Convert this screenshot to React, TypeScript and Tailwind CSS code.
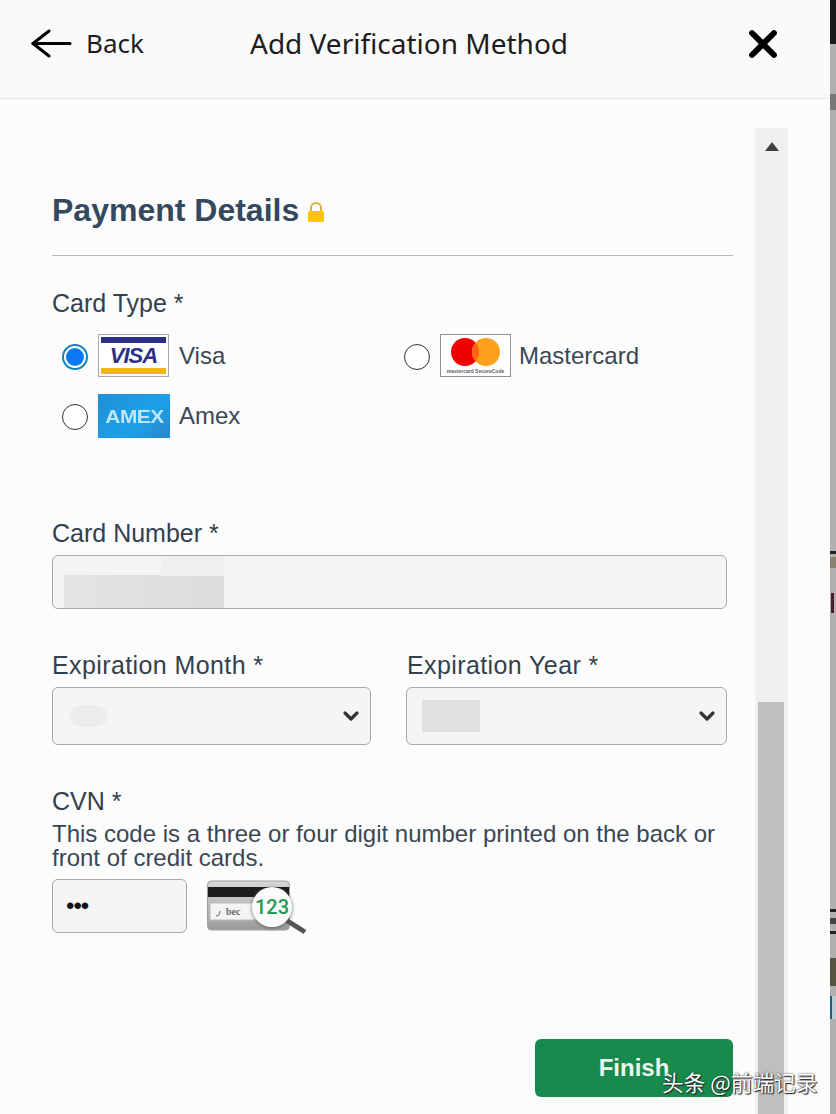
import { ChevronDown, X } from 'lucide-react';

function VisaLogo() {
  return (
    <div className="w-[71px] h-[43px] border border-[#a8a8a8] bg-white flex flex-col justify-between p-[2px] shrink-0">
      <div className="h-[6px] bg-[#2b2f86]" />
      <div className="text-center text-[#2b2f86] font-bold italic text-[22px] leading-none tracking-[-1px]">VISA</div>
      <div className="h-[6px] bg-[#f3b323]" />
    </div>
  );
}

function MastercardLogo() {
  return (
    <div className="w-[71px] h-[43px] border border-[#8f8f8f] bg-white flex flex-col items-center shrink-0">
      <svg width="50" height="32" viewBox="0 0 50 32" className="mt-[1px]">
        <circle cx="14" cy="16" r="14" fill="#f00000" />
        <circle cx="35" cy="16" r="14" fill="#ffa11a" />
        <path d="M24.5 6.7a14 14 0 0 1 0 18.6a14 14 0 0 1 0-18.6z" fill="#fb6414" />
      </svg>
      <div className="text-[5px] leading-[6px] text-[#5c5c6a] font-bold whitespace-nowrap">mastercard SecureCode</div>
    </div>
  );
}

function AmexLogo() {
  return (
    <div className="w-[72px] h-[44px] bg-[linear-gradient(135deg,#1f8fd6,#1da1e8_60%,#2a86c8)] flex items-center justify-center shrink-0">
      <span className="text-[19px] leading-none font-black text-[#bfe6f7] tracking-[-0.5px] scale-x-110">AMEX</span>
    </div>
  );
}

function CvnPicture() {
  return (
    <svg width="102" height="56" viewBox="0 0 102 56" className="shrink-0 mt-[1px]">
      <defs>
        <linearGradient id="cardBody" x1="0" y1="0" x2="0" y2="1">
          <stop offset="0" stopColor="#d8d8d8" />
          <stop offset="1" stopColor="#9a9a9a" />
        </linearGradient>
        <filter id="lensShadow" x="-30%" y="-30%" width="160%" height="160%">
          <feGaussianBlur stdDeviation="1.5" />
        </filter>
      </defs>
      <rect x="0.5" y="1" width="82" height="49" rx="4" fill="url(#cardBody)" stroke="#a0a0a0" />
      <rect x="1" y="7" width="81" height="10" fill="#1c1c1c" />
      <rect x="3" y="23" width="50" height="17" fill="#f4f4f4" stroke="#bbbbbb" />
      <path d="M9 36c3 0 4-2 4-5" fill="none" stroke="#666" strokeWidth="1" />
      <text x="19" y="35" fontSize="10" fontWeight="700" fontFamily="Liberation Serif, serif" fill="#666">bec</text>
      <path d="M79 40l19 12" stroke="#555" strokeWidth="5" />
      <circle cx="65" cy="28" r="21" fill="#555" opacity="0.5" filter="url(#lensShadow)" />
      <circle cx="65" cy="27" r="20" fill="#fbfbfb" />
      <text x="65" y="34" textAnchor="middle" fontSize="20" fontWeight="500" fontFamily="Roboto, sans-serif" fill="#1f9a58">123</text>
    </svg>
  );
}

function Radio({ checked }: { checked?: boolean }) {
  return checked ? (
    <span className="w-[26px] h-[26px] mt-[2px] rounded-full border-2 border-[#1083b8] bg-white flex items-center justify-center shrink-0">
      <span className="w-[18px] h-[18px] rounded-full bg-[#0a78f5]" />
    </span>
  ) : (
    <span className="w-[26px] h-[26px] mt-[2px] rounded-full border-[1.5px] border-[#333] bg-white shrink-0" />
  );
}

export default function App() {
  return (
    <div className="relative w-[836px] h-[1114px] overflow-hidden flex bg-[#fdfcfd] text-[#33404d] font-['Liberation_Sans',Arial,sans-serif]">
      <div className="w-[830px] flex flex-col">
        {/* top bar */}
        <header className="h-[99px] shrink-0 border-b border-[#e6e4e5] bg-[#fbfafa] flex items-center pl-[31px] pr-[45px] pb-[11px] font-['Noto_Sans',sans-serif] text-[#1d1d1f]">
          <div className="w-[219px] flex items-center gap-[14px]">
            <svg width="41" height="30" viewBox="0 0 41 30" fill="none" stroke="black" strokeWidth="3" strokeLinecap="round" strokeLinejoin="round">
              <path d="M18 2L2 14.5L18 27" />
              <path d="M2 14.5H39" />
            </svg>
            <span className="text-[26px] leading-none mb-[2px]">Back</span>
          </div>
          <h1 className="flex-1 text-[28px] leading-none font-normal mb-[2px]">Add Verification Method</h1>
          <X size={44} strokeWidth={3.2} className="text-black" />
        </header>

        <div className="flex-1 flex pl-[52px]">
          <div className="w-[681px] shrink-0">
            <div className="flex items-center gap-[8px] pt-[66px] h-[157px] border-b border-[#b8b8ba]">
              <h2 className="text-[32px] leading-[44px] font-bold text-[#34495e]">Payment Details</h2>
              <svg width="18" height="22" viewBox="0 0 18 22" className="mt-[3px]">
                <path d="M4 10V7a5 5 0 0 1 10 0v3" fill="none" stroke="#d9b43a" strokeWidth="2" />
                <rect x="1" y="10" width="16" height="11" rx="1.5" fill="#fcc30b" />
              </svg>
            </div>

            <div className="mt-[33px] text-[25px] leading-[28px]">Card Type *</div>

            <div className="mt-[17px] pl-[10px] grid grid-cols-[342px_1fr] gap-y-[17px] text-[24px] text-[#3a4754]">
              <label className="flex items-center h-[43px]">
                <Radio checked />
                <span className="ml-[10px]"><VisaLogo /></span>
                <span className="ml-[10px]">Visa</span>
              </label>
              <label className="flex items-center h-[43px]">
                <Radio />
                <span className="ml-[10px]"><MastercardLogo /></span>
                <span className="ml-[8px]">Mastercard</span>
              </label>
              <label className="flex items-center h-[44px]">
                <Radio />
                <span className="ml-[10px]"><AmexLogo /></span>
                <span className="ml-[9px]">Amex</span>
              </label>
            </div>

            <div className="mt-[81px] text-[25px] leading-[28px]">Card Number *</div>
            <div className="mt-[8px] w-[675px] h-[54px] rounded-[6px] border border-[#a8a8a8] bg-[#f6f5f6] relative overflow-hidden">
              <div className="absolute left-[11px] top-[19px] w-[160px] h-[33px] bg-[linear-gradient(90deg,#e4e4e4,#dcdcdc)]" />
              <div className="absolute left-[108px] top-[1px] w-[63px] h-[19px] bg-[#efefef]" />
            </div>

            <div className="mt-[42px] flex gap-[35px] text-[25px] leading-[28px] tracking-[0.4px]">
              <div className="w-[319px]">
                <div>Expiration Month *</div>
                <div className="mt-[8px] h-[58px] rounded-[6px] border border-[#a8a8a8] bg-[#f6f5f6] flex items-center justify-between pl-[17px] pr-[7px]">
                  <div className="w-[37px] h-[22px] rounded-full bg-[#ececee]" />
                  <ChevronDown size={24} strokeWidth={3.2} className="text-[#333]" />
                </div>
              </div>
              <div className="w-[321px]">
                <div className="pl-[1px]">Expiration Year *</div>
                <div className="mt-[8px] h-[58px] rounded-[6px] border border-[#a8a8a8] bg-[#f6f5f6] flex items-center justify-between pl-[15px] pr-[7px]">
                  <div className="w-[58px] h-[32px] bg-[#e0e0e0]" />
                  <ChevronDown size={24} strokeWidth={3.2} className="text-[#333]" />
                </div>
              </div>
            </div>

            <div className="mt-[42px] text-[25px] leading-[28px]">CVN *</div>
            <p className="mt-[7px] w-[680px] text-[24px] leading-[24px] text-[#3a4754]">
              This code is a three or four digit number printed on the back or front of credit cards.
            </p>
            <div className="mt-[9px] flex items-start gap-[20px]">
              <div className="w-[135px] h-[54px] rounded-[6px] border border-[#a8a8a8] bg-[#f6f5f6] flex items-center pl-[13px] text-[#111] text-[24px] tracking-[-1px]">
                •••
              </div>
              <CvnPicture />
            </div>

            <div className="mt-[103px] flex justify-end">
              <button className="w-[198px] h-[58px] rounded-[6px] bg-[#178b4d] text-[#eaf7ef] text-[24px] font-bold">Finish</button>
            </div>
          </div>

          {/* scrollbar */}
          <div className="ml-[22px] mt-[29px] w-[33px] bg-[#f1f0f1] flex flex-col items-center">
            <svg width="14" height="9" viewBox="0 0 14 9" className="mt-[14px]">
              <path d="M7 0l7 9H0z" fill="#404040" />
            </svg>
            <div className="mt-[551px] w-[26px] flex-1 self-start ml-[3px] bg-[#bfbfc0]" />
          </div>
        </div>
      </div>

      {/* window behind the dialog */}
      <div className="w-[6px] bg-[#b0b0b0] relative">
        <div className="absolute top-0 left-0 w-full h-[44px] bg-[#1a1a1a]" />
        <div className="absolute top-[94px] left-0 w-full h-[16px] bg-[#777]" />
        <div className="absolute top-[551px] left-0 w-full h-[3px] bg-[#222]" />
        <div className="absolute top-[557px] left-0 w-full h-[11px] bg-[#8a8270]" />
        <div className="absolute top-[593px] left-[1px] w-[3px] h-[20px] bg-[#4a2030]" />
        <div className="absolute top-[909px] left-0 w-full h-[3px] bg-[#222]" />
        <div className="absolute top-[918px] left-0 w-full h-[6px] bg-[#444]" />
        <div className="absolute top-[931px] left-0 w-full h-[3px] bg-[#222]" />
        <div className="absolute top-[958px] left-0 w-full h-[28px] bg-[#55553f]" />
        <div className="absolute top-[996px] left-0 w-full h-[23px] bg-[#b8ccd4] border-l-2 border-[#1d5f7a]" />
      </div>

      {/* watermark */}
      <div className="absolute left-[662px] top-[1068px] text-[21.7px] leading-[28px] text-white font-['Noto_Sans_CJK_SC',sans-serif] [text-shadow:0_0_2px_#222,1px_1px_1px_#222] whitespace-nowrap">
        头条 @前端记录
      </div>
    </div>
  );
}
